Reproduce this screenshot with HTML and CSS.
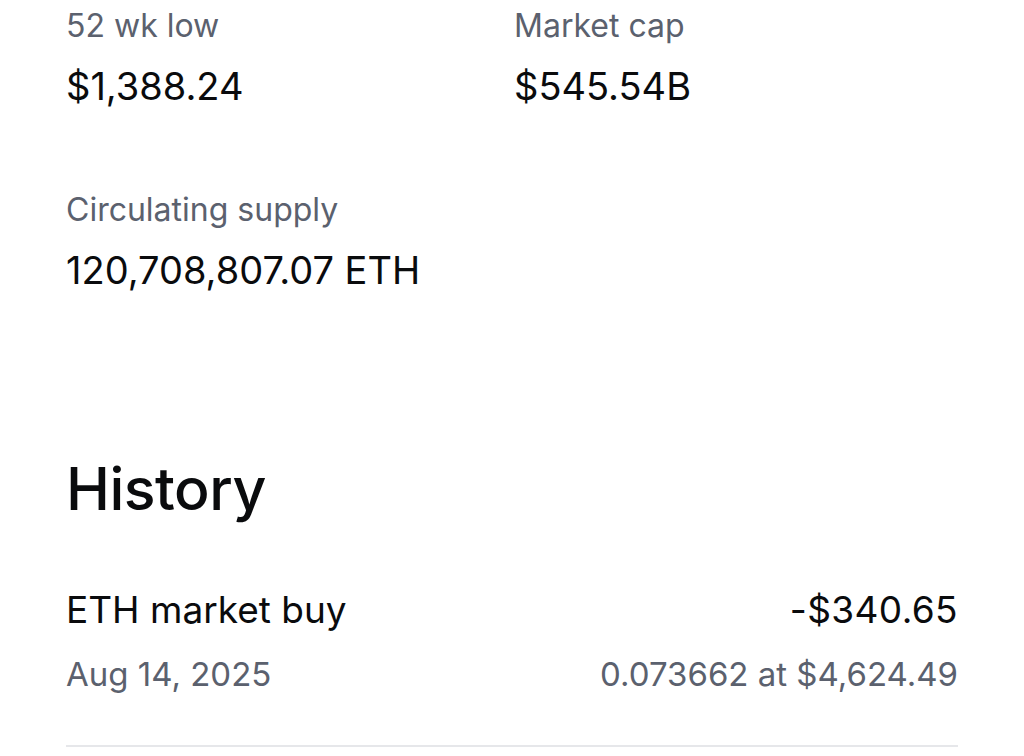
FILE: index.html
```html
<!DOCTYPE html>
<html lang="en">
<head>
<meta charset="utf-8">
<title>ETH stats</title>
<link rel="stylesheet" href="styles.css">
</head>
<body>
<main class="page">
  <section class="stats">
    <div class="stat">
      <div class="stat-label">52 wk low</div>
      <div class="stat-value">$1,388.24</div>
    </div>
    <div class="stat">
      <div class="stat-label">Market cap</div>
      <div class="stat-value">$545.54B</div>
    </div>
    <div class="stat">
      <div class="stat-label">Circulating supply</div>
      <div class="stat-value">120,708,807.07 ETH</div>
    </div>
  </section>
  <section class="history">
    <h2 class="history-title">History</h2>
    <div class="tx">
      <div class="tx-row">
        <span class="tx-name">ETH market buy</span>
        <span class="tx-amount">-$340.65</span>
      </div>
      <div class="tx-row">
        <span class="tx-sub">Aug 14, 2025</span>
        <span class="tx-sub">0.073662 at $4,624.49</span>
      </div>
    </div>
  </section>
</main>
</body>
</html>
```

FILE: styles.css
```css
html, body {
  margin: 0;
  padding: 0;
  background: #ffffff;
}

body {
  font-family: Inter, "Liberation Sans", Arial, sans-serif;
  color: #0a0b0d;
  -webkit-font-smoothing: antialiased;
}

.page {
  padding: 0 66px;
}

.stats {
  display: grid;
  grid-template-columns: 448px 1fr;
}

.stat {
  height: 184px;
  padding-top: 2px;
  box-sizing: border-box;
}

.stat-label {
  font-size: 32px;
  line-height: 48px;
  color: #5b616e;
  font-weight: 400;
}

.stat-value {
  font-size: 38px;
  line-height: 72px;
  color: #0a0b0d;
  font-weight: 400;
}

.history {
  padding-top: 81px;
}

.history-title {
  margin: 0;
  font-size: 59px;
  line-height: 80px;
  font-weight: 500;
  letter-spacing: -0.5px;
}

.tx {
  margin-top: 51px;
  border-bottom: 2px solid #e6e7ea;
  padding-bottom: 36px;
}

.tx-row {
  display: flex;
  justify-content: space-between;
  align-items: baseline;
}

.tx-name,
.tx-amount {
  font-size: 37px;
  line-height: 60px;
  color: #0a0b0d;
}

.tx-amount {
  letter-spacing: 0.4px;
}

.tx-sub {
  font-size: 33px;
  line-height: 69px;
  color: #5b616e;
}
```
